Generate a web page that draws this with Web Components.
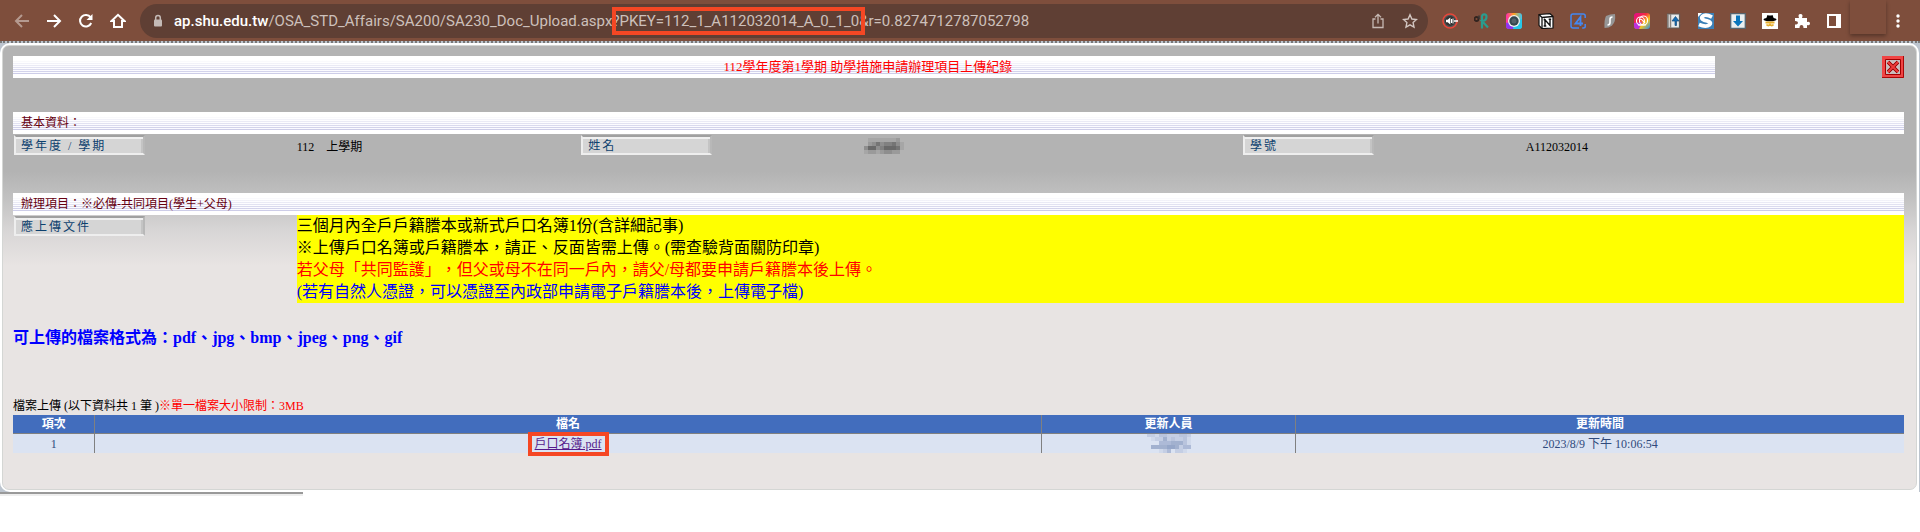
<!DOCTYPE html>
<html lang="zh-Hant">
<head>
<meta charset="utf-8">
<title>助學措施申請辦理項目上傳紀錄</title>
<style>
body {
  margin: 0;
  background: #fff;
  color: #000;
  font: 12px/18px "Liberation Serif", "Noto Sans CJK TC", serif;
  text-spacing-trim: space-all;
}
</style>
</head>
<body>
<browser-toolbar></browser-toolbar>
<record-page></record-page>

<script>
const SERIF = '"Liberation Serif", "Noto Sans CJK TC", serif';

function define (name, html, setup) {
  const template = document.createElement('template');
  template.innerHTML = html;

  customElements.define(name, class extends HTMLElement {
    constructor () {
      super();
      this.attachShadow({ mode: 'open' });
      this.shadowRoot.append(template.content.cloneNode(true));
    }

    connectedCallback () {
      if (setup) setup(this, this.shadowRoot);
    }
  });
}

const ICONS = {
  back: '<path d="M15 8H2M8 2L2 8l6 6" fill="none" stroke="#b59a90" stroke-width="2"/>',
  forward: '<path d="M1 8h13M8 2l6 6-6 6" fill="none" stroke="#fff" stroke-width="2"/>',
  reload: '<path d="M13.2 10A5.8 5.8 0 1 1 12.6 4.4" fill="none" stroke="#fff" stroke-width="2"/><path d="M14.5 1v6h-6z" fill="#fff"/>',
  home: '<path d="M1.5 8L8 1.8 14.5 8H12v6H4V8z" fill="none" stroke="#fff" stroke-width="2" stroke-linejoin="miter"/>',
  lock: '<rect x="4" y="6.500" width="8" height="7" rx="1" fill="#c4bab6"/><path d="M5.700 7V4.700a2.300 2.300 0 0 1 4.600 0V7" fill="none" stroke="#c4bab6" stroke-width="1.500"/>',
  share: '<path d="M5.500 6H3v8.500h10V6h-2.500M8 10.500V1.500M5 4.300l3-3 3 3" fill="none" stroke="#c6b8b2" stroke-width="1.300"/>',
  star: '<path d="M8 1.800l1.900 4.200 4.600.5-3.400 3.100.9 4.600L8 11.900l-4 2.300.9-4.600L1.500 6.500l4.600-.5z" fill="none" stroke="#d2c6c1" stroke-width="1.400"/>',
  sound: '<circle cx="8" cy="8" r="7" fill="#555" stroke="#e7473a" stroke-width="1.600"/><circle cx="8" cy="8" r="5" fill="#333"/><path d="M4 6.700h1.700L8.300 4.500v7L5.700 9.300H4z" fill="#fff"/><path d="M9.500 6v4M11 5.500v5" stroke="#fff"/><path d="M12 8h4" stroke="#fff" stroke-width="1.500"/>',
  scissors: '<circle cx="2.500" cy="6" r="2" fill="none" stroke="#33241f" stroke-width="1.800"/><path d="M5 6V2.500" fill="none" stroke="#333" stroke-width="1.500"/><path d="M8 15.500V3.500c0-3 4.500-2.800 4.500.3C12.500 7 10 8 8 8l6 6.500" fill="none" stroke="#2a9c8e" stroke-width="2.200"/>',
  camera: '<defs><linearGradient id="g"><stop stop-color="#ff2bb0"/><stop offset=".5" stop-color="#ffa51e"/><stop offset="1" stop-color="#3cc5f0"/></linearGradient></defs><rect width="16" height="16" rx="3" fill="url(#g)"/><path d="M0 10l8-2 3 8H3q-3 0-3-3z" fill="#8f35f2"/><path d="M8 8l8-2v7q0 3-3 3H7z" fill="#25c8e8"/><circle cx="8" cy="8" r="6" fill="#eef2f2"/><circle cx="8" cy="8" r="4.700" fill="#34474f"/><circle cx="8" cy="8" r="2.500" fill="#53616a"/>',
  notion: '<path d="M1 1.500l11-.8 3 2.500V15l-11 .6-3-3.300z" fill="#fff" stroke="#111" stroke-width="1.200"/><path d="M1 1.500l3 3L15 3.500M4 4.500v11" fill="none" stroke="#111" stroke-width="1.300"/><path d="M7 13V6.800l5 5.700V6M5.700 6.800h2M5.700 13h2.600M10.700 6.200h2.500" fill="none" stroke="#111" stroke-width="1.400"/>',
  four: '<path d="M15.200 5V3q0-2-2-2H3Q1 1 1 3v10q0 2 2 2h6M15.200 11v2.500q0 1.500-2 1.500h-1" fill="none" stroke="#4388f2" stroke-width="1.500"/><path d="M10.500 13V4L5.500 10.500H13" fill="none" stroke="#4388f2" stroke-width="1.800"/>',
  bolt: '<path d="M4 3q4-2 9-2 1 8-3 11.500Q7 15 2.500 15 2 7 4 3z" fill="#969696"/><path d="M10.500 4Q8 4 8 6.500v3Q8 12 5.500 12" fill="none" stroke="#fff" stroke-width="1.600"/>',
  cloud: '<defs><linearGradient id="g" x2="1" y2="1"><stop offset=".1" stop-color="#e7107d"/><stop offset=".4" stop-color="#f42c3d"/><stop offset=".65" stop-color="#f4c51f"/><stop offset="1" stop-color="#278cf0"/></linearGradient></defs><rect width="16" height="16" rx="3" fill="url(#g)"/><path d="M0 10l8-1-3 7H3q-3 0-3-3z" fill="#bd30df"/><g fill="none" stroke="#fff" stroke-width="1.100"><rect x="2.500" y="4" width="8" height="8" rx="4"/><rect x="5.500" y="3" width="8" height="9" rx="4"/><path d="M5 7q2-2 4 1l2 2M4 12h8"/></g>',
  upload: '<path d="M1.500 1h12v14h-12z" fill="#e8ebec" stroke="#615c59" stroke-width="1.200"/><path d="M2 1v14M4.500 1v14" stroke="#8b8580" stroke-width="1.500"/><path d="M9 12.500V8H6l3.500-4.500L13 8h-2.500v4.500z" fill="#126eb7" stroke="#174b79" stroke-width=".7"/>',
  letter: '<path fill="#3b80b7" d="M0 0h16v16H0z"/><path d="M14 4.200Q9 1.500 6 2.500 2.500 4 4.500 6.200 6 7.300 9 7.800q5 1.200 2.500 4Q8 14.500 1 11.500" fill="none" stroke="#fff" stroke-width="3.800"/><path d="M0 0h4L0 4z" fill="#fff"/>',
  download: '<path d="M.7.700h14.600v14.600H.7z" fill="#ebf0f1" stroke="#566570" stroke-width="1.300"/><path d="M6 2.500h4V8h3l-5 5.500L3 8h3z" fill="#0876bd"/>',
  spy: '<path fill="#fff" d="M0 0h16v16H0z"/><ellipse cx="8" cy="6.500" rx="6.500" ry="1.800"/><path d="M4 6l1.500-4q2.500 1 5 0L12 6z"/><path d="M3.500 9.500h9M4.500 11.500q1.800 2 3.500 0 1.800 2 3.500 0" fill="none" stroke="#e8ad2d" stroke-width="1.800"/>',
  puzzle: '<path d="M1 5h4Q3.500 1 6.500 1T8 5h5v4q3-1 3 1.500T13 12v3H9.500q0-3-2-3T5.500 15H1v-3.500q3 0 3-1.800T1 8z" fill="#fff"/>',
  side: '<path d="M2 2h12v12H2z" fill="none" stroke="#fff" stroke-width="2"/><path d="M10 2h4v12h-4z" fill="#fff"/>',
  menu: '<g fill="#fff"><circle cx="8" cy="3" r="1.700"/><circle cx="8" cy="8" r="1.700"/><circle cx="8" cy="13" r="1.700"/></g>'
};

define('tool-button', `
<style>
:host {
  display: block;
  flex: none;
  width: 32px;
  height: 32px;
}
button {
  display: grid;
  place-items: center;
  width: 100%;
  height: 100%;
  padding: 0;
  border: 0;
  background: none;
}
svg {
  width: 16px;
  height: 16px;
}
</style>
<button type="button"><svg viewBox="0 0 16 16" aria-hidden="true"></svg></button>
`, (host, root) => {
  root.querySelector('svg').innerHTML = ICONS[host.getAttribute('icon')];
  root.querySelector('button').setAttribute('aria-label', host.getAttribute('icon'));
});

define('address-bar', `
<style>
:host {
  display: flex;
  flex: 1;
  align-items: center;
  min-width: 0;
  height: 34px;
  padding: 0 2px;
  border-radius: 17px;
  background: #5f3f34;
  color: #cdc0bb;
  font: 15px/20px Roboto, sans-serif;
}
.url {
  flex: 1;
  min-width: 0;
  white-space: nowrap;
}
b {
  color: #fff;
  font-weight: 500;
}
.query {
  position: relative;
}
.query::after {
  content: "";
  position: absolute;
  inset: -5px -6px -5px 0;
  border: 4px solid #f54724;
}
</style>
<tool-button icon="lock"></tool-button>
<div class="url" role="textbox" aria-label="網址"><b>ap.shu.edu.tw</b>/OSA_STD_Affairs/SA200/SA230_Doc_Upload.aspx<span class="query">?PKEY=112_1_A112032014_A_0_1_0</span>&amp;r=0.8274712787052798</div>
<tool-button icon="share"></tool-button>
<tool-button icon="star"></tool-button>
`);

define('browser-toolbar', `
<style>
:host {
  display: flex;
  align-items: center;
  box-sizing: border-box;
  height: 41px;
  padding: 0 6px;
  background: #7e4e3c;
}
address-bar {
  margin: 0 6px;
}
.profile {
  flex: none;
  align-self: flex-start;
  width: 36px;
  height: 34px;
  background: #7e4e3c;
  box-shadow: 0 2px 4px #0005;
}
.last {
  margin-left: -4px;
}
</style>
<tool-button icon="back"></tool-button>
<tool-button icon="forward"></tool-button>
<tool-button icon="reload"></tool-button>
<tool-button icon="home"></tool-button>
<address-bar></address-bar>
<tool-button icon="sound"></tool-button>
<tool-button icon="scissors"></tool-button>
<tool-button icon="camera"></tool-button>
<tool-button icon="notion"></tool-button>
<tool-button icon="four"></tool-button>
<tool-button icon="bolt"></tool-button>
<tool-button icon="cloud"></tool-button>
<tool-button icon="upload"></tool-button>
<tool-button icon="letter"></tool-button>
<tool-button icon="download"></tool-button>
<tool-button icon="spy"></tool-button>
<tool-button icon="puzzle"></tool-button>
<tool-button icon="side"></tool-button>
<div class="profile"></div>
<tool-button class="last" icon="menu"></tool-button>
`);

// White bar with fine lilac rules that get stronger towards the bottom.
define('striped-bar', `
<style>
:host {
  display: block;
  box-sizing: border-box;
  height: 22px;
  padding: 2px 0 0 8px;
  background:
    linear-gradient(#fff 4px, #fff0 17px, #fff0 18px, #fff 18px),
    repeating-linear-gradient(#fafaff 0 1px, #cdcde8 1px 2px);
  color: #660010;
  font: 12px/18px ${SERIF};
}
:host([heading]) {
  flex: 0 1 90%;
  color: #f00;
  font-size: 13px;
  text-align: center;
}
h2 {
  margin: 0;
  font: inherit;
}
</style>
<h2><slot></slot></h2>
`);

define('field-label', `
<style>
:host {
  display: block;
  box-sizing: border-box;
  width: 131px;
  height: 20px;
  margin: 1px;
  padding: 0 5px;
  border: 2px solid;
  border-color: #a0a0a0 #b8b8b8 #eee #eee;
  background: #d5d5d5;
  box-shadow: inset 0 2px #f0f0f0, inset -2px 0 #c4c4c4;
  color: #0d416e;
  font: 12px/18px ${SERIF};
  letter-spacing: 2px;
  white-space: nowrap;
}
</style>
<slot></slot>
`);

// Block mosaic over a private name; each digit of "rows" is the strength of one block.
define('pixel-mask', `
<style>
:host {
  display: inline-grid;
  grid-auto-rows: 4px;
  vertical-align: top;
}
</style>
`, (host, root) => {
  const rows = host.getAttribute('rows').split(' ');
  host.style.gridTemplateColumns = `repeat(${rows[0].length}, 4px)`;
  for (const digit of rows.join('')) {
    const cell = document.createElement('i');
    cell.style.background = host.getAttribute('tint');
    cell.style.opacity = digit / 9;
    root.append(cell);
  }
});

define('upload-table', `
<style>
:host {
  display: block;
}
table {
  width: 100%;
  border-collapse: collapse;
  table-layout: fixed;
  font: 12px/18px ${SERIF};
  text-align: center;
}
th, td {
  height: 18px;
  padding: 0;
  border-right: 1px solid #808080;
}
th:last-child, td:last-child {
  border-right: 0;
}
th {
  border-bottom: 1px solid #808080;
  background: #426dbd;
  color: #fff;
}
td {
  height: 19px;
  background: #dbe3f2;
  color: #304a7c;
}
.no { width: 4.3%; }
.file { width: 50%; }
.user { width: 13.4%; }
a {
  position: relative;
  color: #551a8b;
}
a::after {
  content: "";
  position: absolute;
  inset: -5px -7px;
  border: 4px solid #f54724;
}
pixel-mask {
  height: 20px;
  margin-top: -2px;
}
</style>
<table>
  <thead>
    <tr><th class="no">項次</th><th class="file">檔名</th><th class="user">更新人員</th><th>更新時間</th></tr>
  </thead>
  <tbody>
    <tr>
      <td>1</td>
      <td><a href="#">戶口名簿.pdf</a></td>
      <td><pixel-mask tint="#7488b4" rows="22133222332 01225232231 00044455531 05555665244 00012402210"></pixel-mask></td>
      <td>2023/8/9 下午 10:06:54</td>
    </tr>
  </tbody>
</table>
`);

define('record-page', `
<style>
:host {
  display: block;
  border-top: 2px dotted #777;
  background: #bcc4ce;
}
main {
  box-sizing: border-box;
  margin-right: 1px;
  padding: 2px 2px 2px 0;
  border-radius: 10px 10px 0 10px;
  background: #fff;
}
.panel {
  margin-left: 2px;
  padding: 10px 12px 36px 10px;
  border: 1px solid #d4d6d4;
  border-radius: 7px;
  background: linear-gradient(#b3b3b3 125px, #c0c0c0 150px, #d8d6d6 185px, #e8e4e3 220px);
}
header {
  display: flex;
  justify-content: space-between;
  margin-bottom: 34px;
}
.close {
  width: 22px;
  height: 22px;
  padding: 0;
  border: 0;
  background: none;
}
.close svg {
  display: block;
}
.fields {
  display: grid;
  grid-template-columns: 15% 15% 15% 20% 15% 20%;
  height: 59px;
}
.fields > span {
  padding-top: 4px;
}
.term {
  margin-left: 12px;
}
.docs {
  display: grid;
  grid-template-columns: 15% 1fr;
  margin-bottom: 24px;
}
.note {
  background: #ff0;
  font-size: 16px;
  line-height: 22px;
}
.note p {
  margin: 0;
}
.red { color: #f00; }
.blue { color: #00f; }
.formats {
  margin: 0 0 48px;
  color: #00f;
  font-size: 16px;
  font-weight: bold;
  line-height: 22px;
}
.caption {
  margin: 0;
}
.tail {
  height: 40px;
  background: #fff;
}
.tail hr {
  width: 303px;
  height: 2px;
  margin: 0;
  border: 0;
  border-top: 2px solid #999;
  background: #eee;
}
</style>
<main>
  <div class="panel">
    <header>
      <striped-bar heading>112學年度第1學期 助學措施申請辦理項目上傳紀錄</striped-bar>
      <button class="close" type="button" aria-label="關閉">
        <svg width="22" height="22" viewBox="0 0 22 22">
          <path fill="#f04545" d="M0 0h22v22H0z"/>
          <path d="M21.500 0v21.500H0" fill="none" stroke="#a80808"/>
          <path d="M3.500 3.500h15v15h-15z" fill="#c4bcbc" stroke="#a00000"/>
          <path d="M6 6l10 10M16 6L6 16" stroke="#fff" stroke-width="5"/>
          <path d="M6 6l10 10M16 6L6 16" stroke="#8f0b0b" stroke-width="4"/>
          <path d="M6 6l10 10M16 6L6 16" stroke="#ee3b3b" stroke-width="2"/>
        </svg>
      </button>
    </header>
    <striped-bar>基本資料：</striped-bar>
    <div class="fields">
      <field-label>學年度 / 學期</field-label>
      <span>112<span class="term">上學期</span></span>
      <field-label>姓名</field-label>
      <span><pixel-mask tint="#444" rows="0111111120 0235344531 3663466651 1221233220"></pixel-mask></span>
      <field-label>學號</field-label>
      <span>A112032014</span>
    </div>
    <striped-bar>辦理項目：※必傳-共同項目(學生+父母)</striped-bar>
    <div class="docs">
      <field-label>應上傳文件</field-label>
      <div class="note">
        <p>三個月內全戶戶籍謄本或新式戶口名簿1份(含詳細記事)</p>
        <p>※上傳戶口名簿或戶籍謄本，請正、反面皆需上傳。(需查驗背面關防印章)</p>
        <p class="red">若父母「共同監護」，但父或母不在同一戶內，請父/母都要申請戶籍謄本後上傳。</p>
        <p class="blue">(若有自然人憑證，可以憑證至內政部申請電子戶籍謄本後，上傳電子檔)</p>
      </div>
    </div>
    <p class="formats">可上傳的檔案格式為：pdf、jpg、bmp、jpeg、png、gif</p>
    <p class="caption">檔案上傳 (以下資料共 1 筆 )<span class="red">※單一檔案大小限制：3MB</span></p>
    <upload-table></upload-table>
  </div>
</main>
<div class="tail"><hr></div>
`);
</script>
</body>
</html>
